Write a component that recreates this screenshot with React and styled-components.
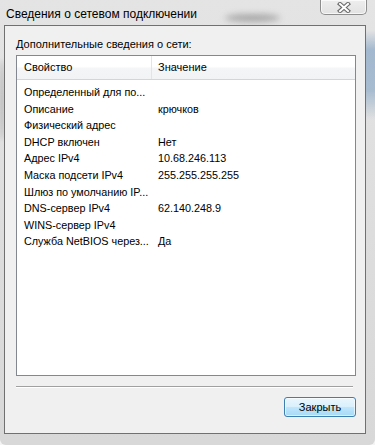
import React from 'react';
import styled, { createGlobalStyle } from 'styled-components';

const GlobalStyle = createGlobalStyle`
  html, body {
    margin: 0;
    padding: 0;
    background: #f4f4f4;
  }
  body {
    font-family: "Liberation Sans", Arial, sans-serif;
    color: #000;
  }
`;

const Frame = styled.div`
  position: relative;
  width: 375px;
  height: 445px;
  display: flex;
  flex-direction: column;
  padding: 0 9px 11px 4px;
  box-sizing: border-box;
  overflow: hidden;
  background:
    linear-gradient(180deg, rgba(110, 150, 190, 0) 30px, rgba(110, 150, 190, 0.55) 50px, rgba(110, 150, 190, 0.5) 90px, rgba(110, 150, 190, 0) 120px) right top / 9px 100% no-repeat,
    linear-gradient(180deg, #e4e4e4 0%, #dcdcdc 60%, #d8d8d8 100%);
  border-bottom-left-radius: 6px;
  border-bottom-right-radius: 6px;
`;

const Smudge = styled.div`
  position: absolute;
  left: ${(p) => p.x}px;
  top: ${(p) => p.y}px;
  width: ${(p) => p.w}px;
  height: ${(p) => p.h}px;
  border-radius: 50%;
  background: ${(p) => p.c};
  filter: blur(${(p) => p.b}px);
`;

const TitleBar = styled.div`
  position: relative;
  height: 25px;
  flex: none;
  display: flex;
  align-items: flex-start;
  justify-content: space-between;
`;

const Title = styled.div`
  font-size: 12px;
  line-height: 16px;
  padding: 6px 0 0 2px;
`;

const CloseButton = styled.div`
  width: 47px;
  height: 15px;
  margin-right: -1px;
  box-sizing: border-box;
  border: 1px solid #8e8e8e;
  border-top: none;
  border-radius: 0 0 5px 5px;
  background: linear-gradient(180deg, #eeeeee 0%, #e2e2e2 100%);
  box-shadow: inset 0 0 0 1px rgba(255, 255, 255, 0.7);
  display: flex;
  align-items: center;
  justify-content: center;
`;

const Client = styled.div`
  position: relative;
  flex: 1;
  display: flex;
  flex-direction: column;
  border: 1px solid #707070;
  background: #f0f0f0;
  padding: 10px 9px 0 11px;
`;

const Caption = styled.div`
  font-size: 11px;
  line-height: 16px;
`;

const ListBox = styled.div`
  margin-top: 3px;
  height: 321px;
  box-sizing: border-box;
  border: 1px solid #828790;
  background: #fff;
  display: flex;
  flex-direction: column;
`;

const HeaderRow = styled.div`
  display: grid;
  grid-template-columns: 135px 1fr;
  height: 24px;
  box-sizing: border-box;
  border-bottom: 1px solid #d5d5d5;
  background: linear-gradient(180deg, #ffffff 0%, #ffffff 45%, #f4f5f7 55%, #f2f3f5 100%);
`;

const HeaderCell = styled.div`
  font-size: 11px;
  line-height: 23px;
  padding-left: ${(p) => p.pad}px;
  border-right: ${(p) => (p.divider ? '1px solid #e3e4e6' : 'none')};
`;

const Rows = styled.div`
  padding-top: 4px;
`;

const Row = styled.div`
  display: grid;
  grid-template-columns: 135px 1fr;
  height: 16.6px;
  font-size: 10.8px;
  line-height: 16.6px;
  white-space: nowrap;
`;

const Cell = styled.div`
  padding-left: ${(p) => p.pad}px;
  overflow: hidden;
`;

const Separator = styled.div`
  margin-top: 10px;
  height: 1px;
  background: #a0a0a0;
  border-bottom: 1px solid #ffffff;
  margin-right: 3px;
`;

const Footer = styled.div`
  display: flex;
  justify-content: flex-end;
  padding-top: 9px;
`;

const Button = styled.button`
  width: 72px;
  height: 20px;
  box-sizing: border-box;
  border: 1px solid #3c7fb1;
  border-radius: 3px;
  background: linear-gradient(180deg, #eaf6fd 0%, #d9f0fc 48%, #bee6fd 52%, #a7d9f5 100%);
  box-shadow: inset 0 0 0 1px rgba(255, 255, 255, 0.6);
  font-family: "Liberation Sans", Arial, sans-serif;
  font-size: 11px;
  color: #000;
  padding: 0;
`;

const rows = [
  ['Определенный для по...', ''],
  ['Описание', 'крючков'],
  ['Физический адрес', ''],
  ['DHCP включен', 'Нет'],
  ['Адрес IPv4', '10.68.246.113'],
  ['Маска подсети IPv4', '255.255.255.255'],
  ['Шлюз по умолчанию IP...', ''],
  ['DNS-сервер IPv4', '62.140.248.9'],
  ['WINS-сервер IPv4', ''],
  ['Служба NetBIOS через...', 'Да'],
];

const CloseGlyph = () => (
  <svg width="14" height="11" viewBox="0 0 14 11">
    <path d="M3 2 L11 9 M11 2 L3 9" stroke="#6a6a6a" strokeWidth="4.2" strokeLinecap="square" />
    <path d="M3 2 L11 9 M11 2 L3 9" stroke="#ffffff" strokeWidth="2" strokeLinecap="square" />
  </svg>
);

export default function App() {
  return (
    <>
      <GlobalStyle />
      <Frame>
        <Smudge x={225} y={14} w={55} h={8} c="rgba(60,60,60,0.35)" b={3} />
        <Smudge x={0} y={60} w={4} h={80} c="rgba(120,120,120,0.4)" b={2} />
        <TitleBar>
          <Title>Сведения о сетевом подключении</Title>
          <CloseButton>
            <CloseGlyph />
          </CloseButton>
        </TitleBar>
        <Client>
          <Caption>Дополнительные сведения о сети:</Caption>
          <ListBox>
            <HeaderRow>
              <HeaderCell pad={7} divider>Свойство</HeaderCell>
              <HeaderCell pad={6}>Значение</HeaderCell>
            </HeaderRow>
            <Rows>
              {rows.map(([name, value]) => (
                <Row key={name}>
                  <Cell pad={7}>{name}</Cell>
                  <Cell pad={6}>{value}</Cell>
                </Row>
              ))}
            </Rows>
          </ListBox>
          <Separator />
          <Footer>
            <Button>Закрыть</Button>
          </Footer>
        </Client>
      </Frame>
    </>
  );
}
